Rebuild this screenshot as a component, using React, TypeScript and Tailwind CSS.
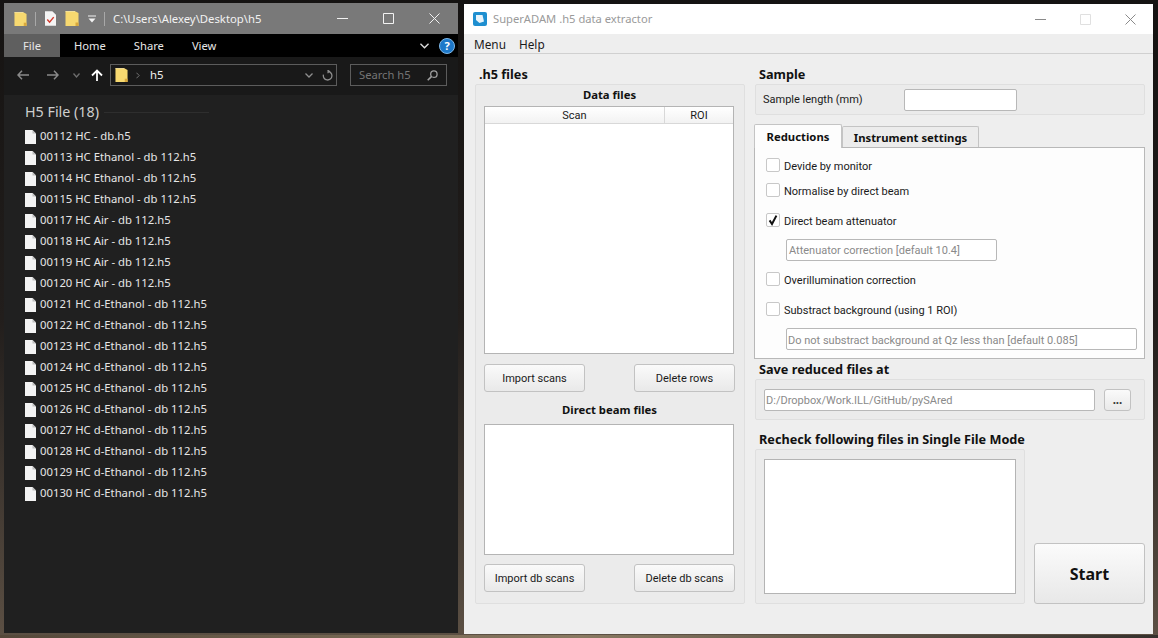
import React from "react";

const ui = "font-['Noto_Sans','Open_Sans',sans-serif]";
const qt = "font-['Roboto','Noto_Sans',sans-serif] text-[11px]";

const files = [
  "00112 HC - db.h5",
  "00113 HC Ethanol - db 112.h5",
  "00114 HC Ethanol - db 112.h5",
  "00115 HC Ethanol - db 112.h5",
  "00117 HC Air - db 112.h5",
  "00118 HC Air - db 112.h5",
  "00119 HC Air - db 112.h5",
  "00120 HC Air - db 112.h5",
  "00121 HC d-Ethanol - db 112.h5",
  "00122 HC d-Ethanol - db 112.h5",
  "00123 HC d-Ethanol - db 112.h5",
  "00124 HC d-Ethanol - db 112.h5",
  "00125 HC d-Ethanol - db 112.h5",
  "00126 HC d-Ethanol - db 112.h5",
  "00127 HC d-Ethanol - db 112.h5",
  "00128 HC d-Ethanol - db 112.h5",
  "00129 HC d-Ethanol - db 112.h5",
  "00130 HC d-Ethanol - db 112.h5",
];

function Folder({ className }: { className?: string }) {
  return (
    <svg viewBox="0 0 14 17" className={className}>
      <path d="M0.5 1.2 H10 L13.5 3 V16 H0.5 Z" fill="#f7d970" />
      <path d="M10.5 12.5 H13.5 V16 H10.5 Z" fill="#d9a83c" />
      <path d="M0.5 1.2 H10 V2 H0.5 Z" fill="#fbe9a6" />
    </svg>
  );
}

function FileIcon() {
  return (
    <svg viewBox="0 0 11 14" className="w-[11px] h-[14px] shrink-0">
      <path d="M0 0 H7.5 L11 3.5 V14 H0 Z" fill="#f3f3f3" />
      <path d="M7.5 0 V3.5 H11 Z" fill="#bdbdbd" />
    </svg>
  );
}

function QtCheck({ label, checked, low }: { label: string; checked?: boolean; low?: boolean }) {
  return (
    <div className="flex items-center h-[14px] pl-[11px]">
      <span className="w-[14px] h-[14px] bg-white border border-[#c8c8c8] rounded-[2px] shrink-0 flex items-center justify-center">
        {checked && (
          <svg viewBox="0 0 12 12" className="w-[12px] h-[12px]">
            <path d="M2.6 6.4 L5 10 L9.4 1.6" fill="none" stroke="#111" strokeWidth="2" />
          </svg>
        )}
      </span>
      <span className={`ml-[4px] ${low ? "pt-[3px]" : "pt-[2px]"} ${qt} text-[#1a1a1a] leading-none whitespace-nowrap`}>{label}</span>
    </div>
  );
}

function QtButton({ label, className }: { label: string; className?: string }) {
  return (
    <button className={`h-[28px] pt-[2px] rounded-[3px] border border-[#c2c2c2] bg-gradient-to-b from-[#fafafa] to-[#e9e9e9] ${qt} text-[#1a1a1a] ${className ?? ""}`}>
      {label}
    </button>
  );
}

function Heading({ children, className }: { children: React.ReactNode; className?: string }) {
  return <div className={`h-[20px] pl-[4px] text-[12.7px] font-bold leading-[20px] text-[#111] whitespace-nowrap ${className ?? ""}`}>{children}</div>;
}

function Explorer() {
  return (
    <div className="w-[454px] h-[630px] shrink-0 flex flex-col bg-[#202020] text-white">
      {/* Title bar */}
      <div className="h-[31px] bg-[#797979] flex items-center pl-[10px] shrink-0">
        <Folder className="w-[13px] h-[16px]" />
        <span className="ml-[8px] w-px h-[14px] bg-[#a8a8a8]" />
        <svg viewBox="0 0 12 16" className="ml-[9px] w-[11px] h-[15px]">
          <path d="M0 0 H8 L12 4 V16 H0 Z" fill="#f4f4f4" />
          <path d="M2.5 9 L5 12 L9.5 6.5" fill="none" stroke="#d23b2f" strokeWidth="1.6" />
        </svg>
        <Folder className="ml-[9px] w-[14px] h-[17px]" />
        <svg viewBox="0 0 9 8" className="ml-[9px] w-[9px] h-[8px]">
          <path d="M0 0.5 H8 V1.5 H0 Z M0.5 3.5 H7.5 L4 7.5 Z" fill="#f2f2f2" />
        </svg>
        <span className="ml-[7px] w-px h-[14px] bg-[#a8a8a8]" />
        <span className="ml-[8px] pt-[2px] text-[11.3px] text-[#f2f2f2] whitespace-nowrap">C:\Users\Alexey\Desktop\h5</span>
        <div className="ml-auto flex items-center pr-[18px] gap-[35px]">
          <svg viewBox="0 0 11 11" className="w-[11px] h-[11px]"><path d="M0 5.5 H11" stroke="#f2f2f2" /></svg>
          <svg viewBox="0 0 11 11" className="w-[11px] h-[11px]"><path d="M0.5 0.5 H10.5 V10.5 H0.5 Z" fill="none" stroke="#f2f2f2" /></svg>
          <svg viewBox="0 0 11 11" className="w-[11px] h-[11px]"><path d="M0.5 0.5 L10.5 10.5 M10.5 0.5 L0.5 10.5" stroke="#f2f2f2" /></svg>
        </div>
      </div>
      {/* Ribbon */}
      <div className="h-[23px] bg-black flex items-center shrink-0 text-[11.2px] text-[#e8e8e8] pt-[2px]">
        <div className="w-[56px] h-[23px] -mt-[2px] pt-[2px] bg-[#5f5f5f] flex items-center justify-center">File</div>
        <span className="ml-[14px]">Home</span>
        <span className="ml-[28px]">Share</span>
        <span className="ml-[28px]">View</span>
        <svg viewBox="0 0 10 6" className="ml-auto -mt-[2px] w-[9px] h-[6px]"><path d="M0.5 0.5 L5 5 L9.5 0.5" fill="none" stroke="#ddd" strokeWidth="1.5" /></svg>
        <span className="ml-[10px] mr-[3px] -mt-[2px] w-[16px] h-[16px] rounded-full bg-[#1d78c9] border border-[#7fb8e8] flex items-center justify-center text-[11px] font-bold leading-none text-white">?</span>
      </div>
      {/* Navigation */}
      <div className="h-[38px] bg-[#191919] flex items-center shrink-0 pl-[13px] pb-[2px]">
        <svg viewBox="0 0 12 10" className="w-[12px] h-[10px]"><path d="M12 5 H1 M5 0.8 L1 5 L5 9.2" fill="none" stroke="#8a8a8a" strokeWidth="1.5" /></svg>
        <svg viewBox="0 0 12 10" className="ml-[18px] w-[12px] h-[10px]"><path d="M0 5 H11 M7 0.8 L11 5 L7 9.2" fill="none" stroke="#8a8a8a" strokeWidth="1.5" /></svg>
        <svg viewBox="0 0 7 5" className="ml-[14px] w-[7px] h-[5px]"><path d="M0.5 0.5 L3.5 4 L6.5 0.5" fill="none" stroke="#6e6e6e" strokeWidth="1.3" /></svg>
        <svg viewBox="0 0 12 12" className="ml-[11px] w-[12px] h-[12px]"><path d="M6 12 V1.5 M1 6.5 L6 1.5 L11 6.5" fill="none" stroke="#fff" strokeWidth="1.8" /></svg>
        <div className="ml-[7px] w-[227px] h-[22px] border border-[#5c5c5c] flex items-center pl-[4px]">
          <Folder className="w-[13px] h-[16px]" />
          <svg viewBox="0 0 5 8" className="ml-[8px] w-[4px] h-[7px]"><path d="M0.5 0.5 L4 4 L0.5 7.5" fill="none" stroke="#8a8a8a" /></svg>
          <span className="ml-[10px] text-[11.3px] text-[#f0f0f0]">h5</span>
          <svg viewBox="0 0 8 5" className="ml-auto w-[8px] h-[5px]"><path d="M0.5 0.5 L4 4 L7.5 0.5" fill="none" stroke="#8f8f8f" strokeWidth="1.3" /></svg>
          <svg viewBox="0 0 12 12" className="ml-[9px] mr-[3px] w-[11px] h-[11px]"><path d="M6 1.5 A4.7 4.7 0 1 1 1.6 5 M6 0 L8.2 1.6 L6 3.4" fill="none" stroke="#8f8f8f" strokeWidth="1.4" /></svg>
        </div>
        <div className="ml-[13px] w-[97px] h-[22px] border border-[#5c5c5c] flex items-center pl-[8px] pr-[8px]">
          <span className="text-[11.2px] text-[#757575] whitespace-nowrap">Search h5</span>
          <svg viewBox="0 0 12 12" className="ml-auto w-[11px] h-[11px]"><circle cx="7.5" cy="4.5" r="3.5" fill="none" stroke="#a0a0a0" strokeWidth="1.4" /><path d="M5 7 L0.8 11.2" stroke="#a0a0a0" strokeWidth="1.8" /></svg>
        </div>
      </div>
      {/* Files */}
      <div className="flex-1 pl-[21px] pt-[7px]">
        <div className="flex items-center h-[20px]">
          <span className="text-[14.3px] text-[#cfcfcf] whitespace-nowrap">H5 File (18)</span>
          <span className="ml-[5px] w-[105px] h-px bg-[#2e2e2e]" />
        </div>
        <div className="mt-[4px] flex flex-col">
          {files.map((f) => (
            <div key={f} className="h-[21px] flex items-center">
              <FileIcon />
              <span className="ml-[4px] text-[11.3px] text-[#e6e6e6] whitespace-nowrap">{f}</span>
            </div>
          ))}
        </div>
      </div>
    </div>
  );
}

function SuperAdam() {
  return (
    <div className="w-[689px] h-[630px] shrink-0 flex flex-col bg-[#eeeeee] ml-[6px] mt-px">
      {/* Title */}
      <div className="h-[30px] bg-white flex items-center pl-[9px] shrink-0">
        <svg viewBox="0 0 14 14" className="w-[14px] h-[14px]">
          <rect width="14" height="14" rx="2" fill="#1f8fd0" />
          <path d="M3 3 H9.5 L11 9.5 L6.5 11 L3 8 Z" fill="#e8f4fb" />
        </svg>
        <span className="ml-[6px] text-[11.2px] text-[#9a9a9a] whitespace-nowrap">SuperADAM .h5 data extractor</span>
        <div className="ml-auto flex items-center pr-[17px] gap-[34px]">
          <svg viewBox="0 0 11 11" className="w-[11px] h-[11px]"><path d="M0 5.5 H11" stroke="#8a8a8a" /></svg>
          <svg viewBox="0 0 11 11" className="w-[11px] h-[11px]"><path d="M0.5 0.5 H10.5 V10.5 H0.5 Z" fill="none" stroke="#e0e0e0" /></svg>
          <svg viewBox="0 0 11 11" className="w-[11px] h-[11px]"><path d="M0.5 0.5 L10.5 10.5 M10.5 0.5 L0.5 10.5" stroke="#8a8a8a" /></svg>
        </div>
      </div>
      {/* Menu */}
      <div className="h-[20px] border-b border-[#d0d0d0] flex items-center pl-[10px] gap-[13px] shrink-0 text-[11.8px] text-[#1a1a1a] pt-[3px]">
        <span>Menu</span>
        <span>Help</span>
      </div>
      {/* Body */}
      <div className="flex pl-[11px] pt-[10px] gap-[10px]">
        {/* Left column */}
        <div className="w-[270px] flex flex-col">
          <Heading>.h5 files</Heading>
          <div className="h-[520px] border border-[#dfdfdf] rounded-[2px] bg-[#ebebeb] pl-[8px] pr-[9px] flex flex-col">
            <div className="h-[21px] text-[11.3px] font-bold text-[#111] text-center leading-[20px]">Data files</div>
            <div className="w-[250px] h-[248px] border border-[#b4b4b4] bg-white shrink-0">
              <div className={`h-[17px] flex ${qt} text-[#1a1a1a] border-b border-[#d8d8d8] bg-gradient-to-b from-white to-[#f2f2f2] leading-[18px]`}>
                <div className="w-[180px] text-center border-r border-[#d8d8d8]">Scan</div>
                <div className="flex-1 text-center">ROI</div>
              </div>
            </div>
            <div className="mt-[10px] flex justify-between">
              <QtButton label="Import scans" className="w-[101px]" />
              <QtButton label="Delete rows" className="w-[101px]" />
            </div>
            <div className="h-[32px] text-[11.3px] font-bold text-[#111] text-center leading-[36px]">Direct beam files</div>
            <div className="w-[250px] h-[131px] border border-[#b4b4b4] bg-white shrink-0" />
            <div className="mt-[9px] flex justify-between">
              <QtButton label="Import db scans" className="w-[101px]" />
              <QtButton label="Delete db scans" className="w-[101px]" />
            </div>
          </div>
        </div>
        {/* Right column */}
        <div className="w-[390px] flex flex-col">
          <Heading>Sample</Heading>
          <div className="h-[31px] border border-[#dfdfdf] rounded-[2px] bg-[#ebebeb] flex items-center pl-[7px]">
            <span className={`w-[141px] pt-[2px] ${qt} text-[#1a1a1a] whitespace-nowrap`}>Sample length (mm)</span>
            <span className="w-[113px] h-[22px] bg-white border border-[#b8b8b8] rounded-[2px]" />
          </div>
          {/* Tabs */}
          <div className="mt-[9px] flex items-end h-[24px] -ml-px">
            <div className="w-[88px] h-[24px] pt-[2px] bg-[#fdfdfd] border border-b-0 border-[#c4c4c4] rounded-t-[2px] text-[11.3px] font-bold text-[#111] flex items-center justify-center relative z-10">Reductions</div>
            <div className="w-[137px] h-[22px] pt-[2px] bg-[#ececec] border border-b-0 border-[#c4c4c4] rounded-t-[2px] text-[11.3px] font-bold text-[#111] flex items-center justify-center">Instrument settings</div>
          </div>
          <div className="-mt-px -ml-px w-[391px] h-[212px] bg-[#fdfdfd] border border-[#b8b8b8] flex flex-col pt-[10px]">
            <QtCheck label="Devide by monitor" />
            <div className="mt-[11px]"><QtCheck label="Normalise by direct beam" /></div>
            <div className="mt-[16px]"><QtCheck label="Direct beam attenuator" checked /></div>
            <div className={`ml-[31px] mt-[12px] w-[211px] h-[22px] pt-[2px] border border-[#b8b8b8] rounded-[2px] bg-white flex items-center pl-[2px] ${qt} text-[#8a8a8a] whitespace-nowrap`}>Attenuator correction [default 10.4]</div>
            <div className="mt-[11px]"><QtCheck label="Overillumination correction" low /></div>
            <div className="mt-[16px]"><QtCheck label="Substract background (using 1 ROI)" low /></div>
            <div className={`ml-[31px] mt-[12px] w-[351px] h-[22px] pt-[4px] border border-[#b8b8b8] rounded-[2px] bg-white flex items-center pl-[1px] ${qt} text-[#8a8a8a] whitespace-nowrap`}>Do not substract background at Qz less than [default 0.085]</div>
          </div>
          <Heading>Save reduced files at</Heading>
          <div className="h-[41px] border border-[#dfdfdf] rounded-[2px] bg-[#ebebeb] flex items-center pl-[8px]">
            <div className={`w-[331px] h-[22px] pt-[3px] border border-[#b8b8b8] rounded-[2px] bg-white flex items-center pl-[1px] ${qt} text-[#8a8a8a] whitespace-nowrap`}>D:/Dropbox/Work.ILL/GitHub/pySAred</div>
            <button className="ml-[9px] w-[27px] h-[22px] border border-[#c2c2c2] rounded-[3px] bg-gradient-to-b from-[#fafafa] to-[#e9e9e9] text-[11.5px] font-bold leading-none text-[#333]">...</button>
          </div>
          <Heading className="mt-[9px]">Recheck following files in Single File Mode</Heading>
          <div className="flex items-end">
            <div className="w-[270px] h-[155px] border border-[#dfdfdf] rounded-[2px] bg-[#ebebeb] pl-[8px] pt-[9px]">
              <div className="w-[252px] h-[135px] border border-[#b4b4b4] bg-white" />
            </div>
            <button className="ml-[9px] w-[111px] h-[61px] border border-[#c2c2c2] rounded-[3px] bg-gradient-to-b from-[#fbfbfb] to-[#e8e8e8] text-[16px] font-bold text-[#111]">Start</button>
          </div>
        </div>
      </div>
    </div>
  );
}

export default function App() {
  return (
    <div className={`${ui} w-[1158px] h-[638px] overflow-hidden flex flex-col bg-gradient-to-b from-[#151312] via-[#221e1c] to-[#5c5044]`}>
      <div className="flex pl-[4px] pt-[3px]">
        <Explorer />
        <SuperAdam />
      </div>
      <div className="mt-[1px] h-[4px] bg-gradient-to-r from-[#55483a] via-[#8a7a62] to-[#35302c]" />
    </div>
  );
}
